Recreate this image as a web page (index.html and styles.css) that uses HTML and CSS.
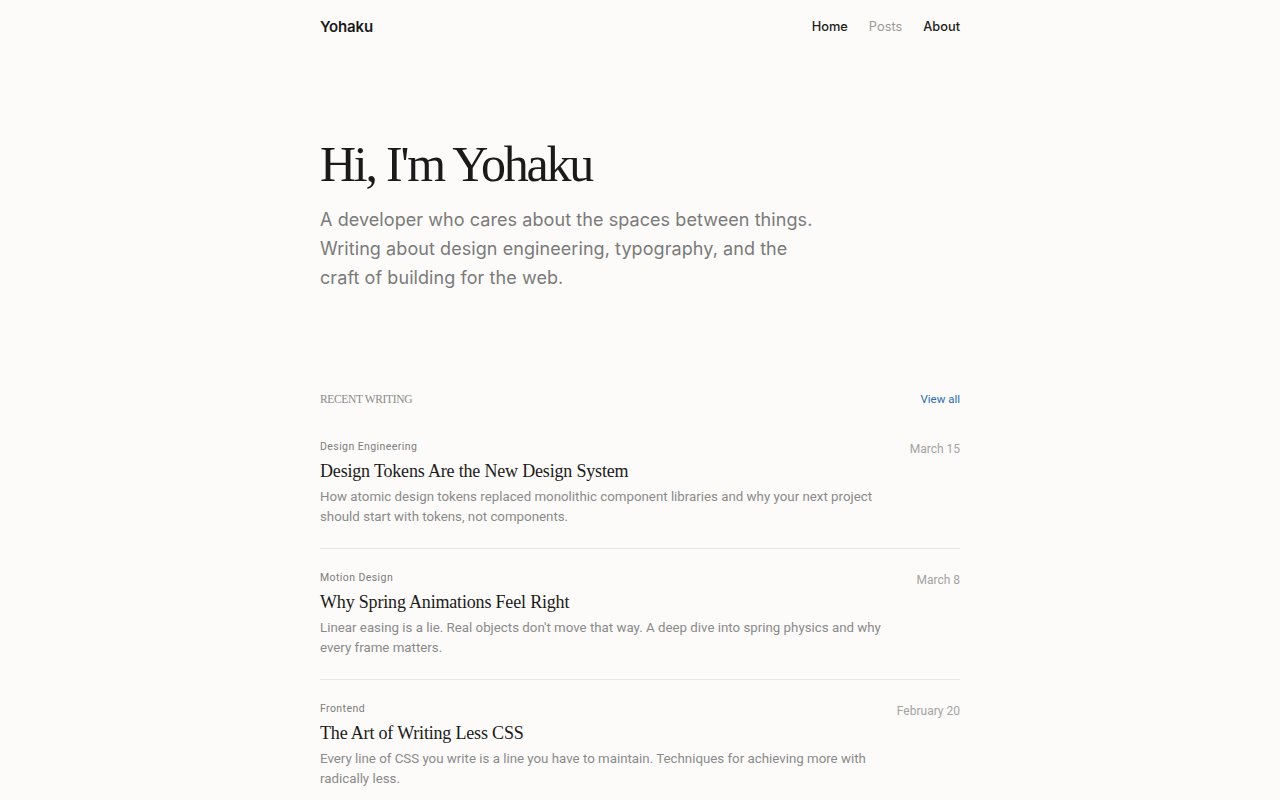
FILE: index.html
```html
<!DOCTYPE html>
<html lang="en">
<head>
<meta charset="utf-8">
<title>Yohaku</title>
<link rel="stylesheet" href="styles.css">
</head>
<body>
<div class="page">
  <header class="site-header">
    <a class="brand" href="#">Yohaku</a>
    <nav class="nav">
      <a href="#" class="nav-link">Home</a>
      <a href="#" class="nav-link muted">Posts</a>
      <a href="#" class="nav-link">About</a>
    </nav>
  </header>

  <section class="hero">
    <h1 class="hero-title">Hi, I'm Yohaku</h1>
    <p class="hero-sub">A developer who cares about the spaces between things. Writing about design engineering, typography, and the craft of building for the web.</p>
  </section>

  <section class="recent">
    <div class="recent-head">
      <h2 class="recent-label">Recent Writing</h2>
      <a href="#" class="view-all">View all</a>
    </div>
    <ul class="posts">
      <li class="post">
        <div class="post-main">
          <div class="post-cat">Design Engineering</div>
          <h3 class="post-title">Design Tokens Are the New Design System</h3>
          <p class="post-desc">How atomic design tokens replaced monolithic component libraries and why your next project should start with tokens, not components.</p>
        </div>
        <time class="post-date">March 15</time>
      </li>
      <li class="post">
        <div class="post-main">
          <div class="post-cat">Motion Design</div>
          <h3 class="post-title">Why Spring Animations Feel Right</h3>
          <p class="post-desc">Linear easing is a lie. Real objects don't move that way. A deep dive into spring physics and why every frame matters.</p>
        </div>
        <time class="post-date">March 8</time>
      </li>
      <li class="post">
        <div class="post-main">
          <div class="post-cat">Frontend</div>
          <h3 class="post-title">The Art of Writing Less CSS</h3>
          <p class="post-desc">Every line of CSS you write is a line you have to maintain. Techniques for achieving more with radically less.</p>
        </div>
        <time class="post-date">February 20</time>
      </li>
    </ul>
  </section>
</div>
</body>
</html>
```

FILE: styles.css
```css
* { box-sizing: border-box; }
html, body { margin: 0; padding: 0; }
body {
  background: #fcfbf9;
  color: #1c1c1c;
  font-family: Inter, "Noto Sans", sans-serif;
  -webkit-font-smoothing: antialiased;
}
a { text-decoration: none; color: inherit; }

.page {
  width: 640px;
  margin: 0 auto;
}

.site-header {
  display: flex;
  justify-content: space-between;
  align-items: flex-start;
  padding: 16px 0 15px;
}
.brand {
  font-size: 15px;
  line-height: 20px;
  padding-top: 1px;
  font-weight: 600;
  letter-spacing: -0.01em;
  color: #1a1a1a;
}
.nav { display: flex; gap: 21px; padding-top: 1px; }
.nav-link {
  font-size: 12.8px;
  line-height: 20px;
  font-weight: 500;
  color: #222;
}
.nav-link.muted { color: #9a9a9a; font-weight: 400; }

.hero { padding-top: 85px; }
.hero-title {
  margin: 0;
  font-family: "Liberation Serif", "DejaVu Serif", serif;
  font-weight: 400;
  font-size: 50px;
  line-height: 55px;
  letter-spacing: -0.045em;
  color: #1a1a1a;
}
.hero-sub {
  margin: 13px 0 0;
  max-width: 500px;
  font-size: 18px;
  line-height: 29px;
  letter-spacing: 0.004em;
  color: #7a7a7a;
}

.recent { padding-top: 99px; }
.recent-head {
  display: flex;
  justify-content: space-between;
  align-items: center;
  margin-bottom: 11px;
}
.recent-label {
  margin: 0;
  font-family: "Liberation Serif", "DejaVu Serif", serif;
  font-weight: 400;
  font-size: 11.5px;
  line-height: 16px;
  text-transform: uppercase;
  letter-spacing: -0.03em;
  color: #8a8a8a;
}
.view-all {
  font-family: Roboto, "Noto Sans", sans-serif;
  font-size: 11.5px;
  line-height: 16px;
  color: #2b6cb0;
}

.posts { list-style: none; margin: 0; padding: 0; }
.post {
  display: flex;
  justify-content: space-between;
  gap: 12px;
  padding: 21px 0 21px;
  border-bottom: 1px solid #e9e7e3;
}
.post:last-child { border-bottom: none; }
.post-main { flex: 1; max-width: 575px; }
.post-cat {
  font-family: Roboto, "Noto Sans", sans-serif;
  font-size: 10.5px;
  line-height: 16px;
  letter-spacing: 0.04em;
  color: #7c7c7c;
}
.post-title {
  margin: 3px 0 0;
  font-family: "Liberation Serif", "DejaVu Serif", serif;
  font-weight: 400;
  font-size: 18px;
  line-height: 26px;
  letter-spacing: -0.01em;
  color: #1a1a1a;
}
.post-desc {
  margin: 3px 0 0;
  font-family: Roboto, "Noto Sans", sans-serif;
  font-size: 13.3px;
  line-height: 20px;
  color: #8a8a8a;
}
.post-date {
  flex: none;
  padding-top: 2px;
  font-family: Roboto, "Noto Sans", sans-serif;
  font-size: 12px;
  line-height: 16px;
  color: #a3a3a3;
}
```
